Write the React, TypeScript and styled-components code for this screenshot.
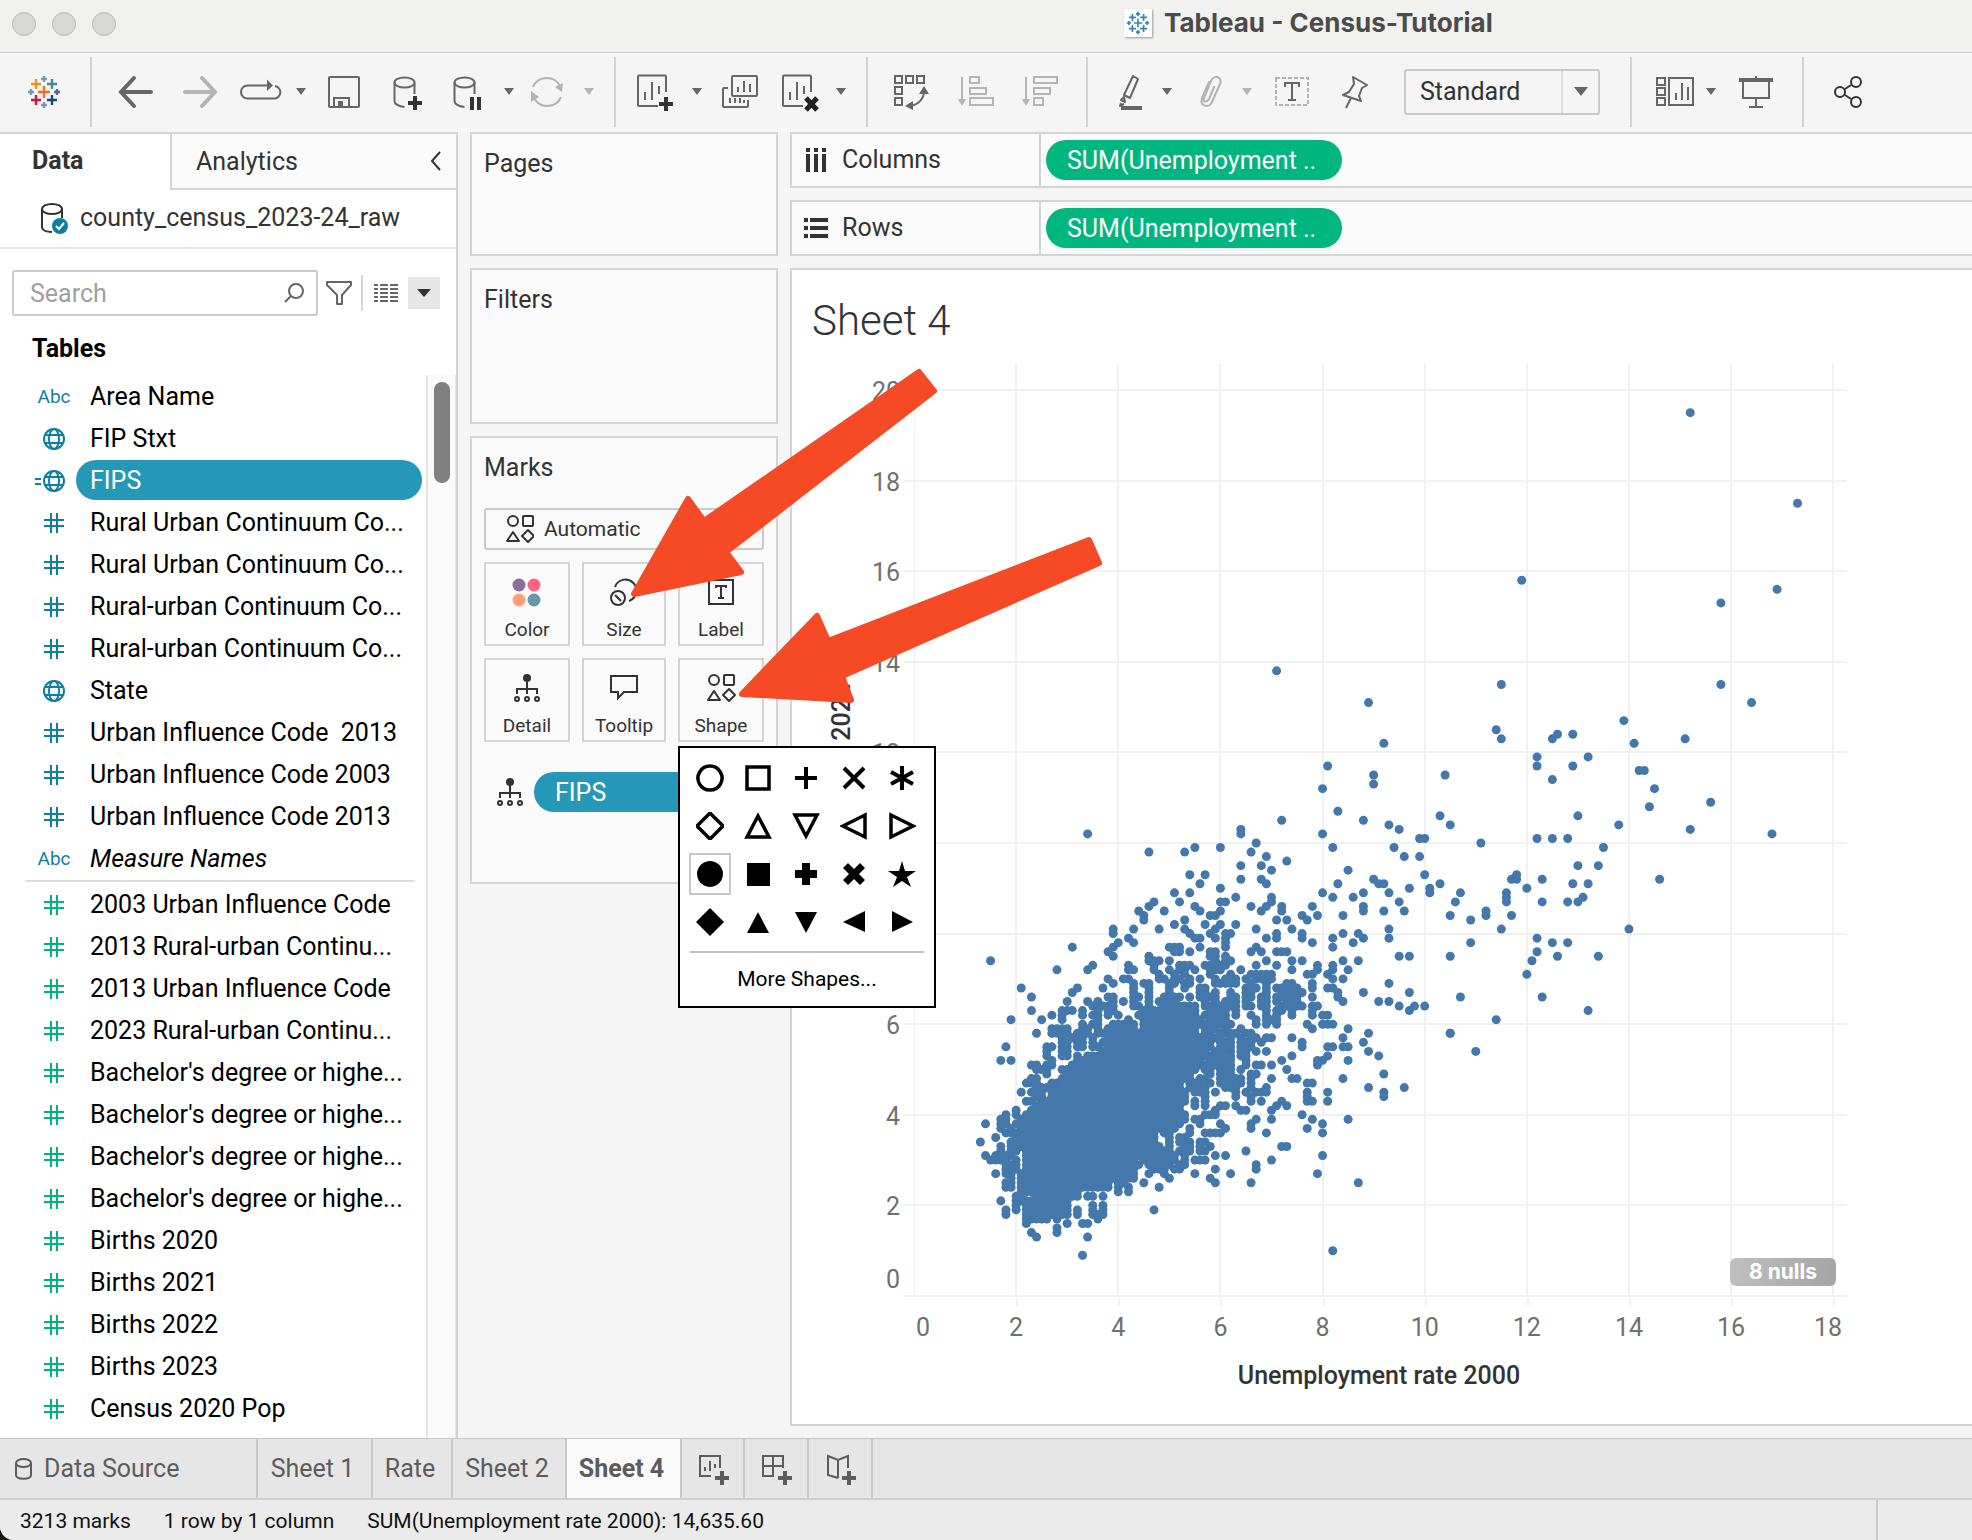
import React from 'react';
import styled, { createGlobalStyle } from 'styled-components';

const line = '#d4d4d4';
const teal = '#2698b7';
const tealDark = '#0f7fa0';
const green = '#00b380';
const ink = '#333333';
const iconGrey = '#666666';
const iconOff = '#b4b4b4';

const Global = createGlobalStyle`
  * { box-sizing: border-box; }
  body { margin: 0; background: #14140f; font-family: Roboto, "Liberation Sans", sans-serif; }
  button, input, select { font-family: inherit; color: inherit; margin: 0; }
`;

const Window = styled.div`
  min-height: 100vh;
  display: flex;
  flex-direction: column;
  background: #f5f5f5;
  color: ${ink};
  font-size: 25px;
  line-height: 28px;
  border-bottom-left-radius: 14px;
  overflow: hidden;
`;

/* ---------- title bar ---------- */
const TitleBar = styled.header`
  display: flex;
  align-items: center;
  height: 53px;
  padding-bottom: 6px;
  background: #f1f1ef;
  border-bottom: 1px solid #cccccb;
`;
const Lights = styled.div`
  display: flex;
  flex: 0 0 57%;
  gap: 16px;
  padding: 2px 12px 0;
`;
const Light = styled.button`
  width: 24px;
  height: 24px;
  padding: 0;
  border: 1px solid #bcbcba;
  border-radius: 50%;
  background: #d8d8d6;
`;
const TitleIcon = styled.span`
  display: flex;
  width: 28px;
  height: 28px;
  margin-right: 12px;
  background: #fff;
  box-shadow: 1px 1px 2px #999;
`;
const TitleText = styled.h1`
  margin: 0;
  font: 700 26px/30px Inter, Roboto, sans-serif;
  color: #4b4b4a;
  white-space: nowrap;
`;

/* ---------- toolbar ---------- */
const Toolbar = styled.nav`
  display: flex;
  align-items: center;
  height: 79px;
  padding-bottom: 2px;
`;
const Group = styled.div<{ $l: number; $r: number; $last?: boolean }>`
  display: flex;
  flex: none;
  align-items: center;
  height: 70px;
  padding: 0 ${p => p.$r}px 0 ${p => p.$l}px;
  border-right: ${p => (p.$last ? 0 : 2)}px solid ${line};
`;
const Tool = styled.button<{ $w: number; $off?: boolean }>`
  display: flex;
  justify-content: center;
  align-items: center;
  width: ${p => p.$w}px;
  height: 48px;
  padding: 0;
  border: 0;
  background: none;
  color: ${p => (p.$off ? iconOff : iconGrey)};
  svg { flex: none; overflow: visible; }
`;
const SelectWrap = styled.label`
  display: flex;
  position: relative;
  width: 196px;
  height: 46px;
  margin-left: 24px;
  border: 2px solid #cacaca;
  border-radius: 3px;
`;
const Select = styled.select`
  appearance: none;
  flex: 1;
  padding: 0 0 0 14px;
  border: 0;
  background: none;
  font-size: 25px;
`;
const SelectCaret = styled.span`
  display: flex;
  align-items: center;
  justify-content: center;
  width: 37px;
  border-left: 2px solid #dcdcdc;
  color: ${iconGrey};
`;

/* ---------- body ---------- */
const Body = styled.main`
  position: relative;
  display: flex;
  flex: 1;
  gap: 12px;
`;
const DataPane = styled.aside`
  display: flex;
  flex-direction: column;
  flex: 0 0 458px;
  background: #fff;
  border-top: 2px solid ${line};
  border-right: 2px solid ${line};
`;
const PaneTabs = styled.div`
  display: flex;
  height: 56px;
`;
const DataTab = styled.button`
  flex: 0 0 170px;
  padding: 0 0 4px 32px;
  border: 0;
  background: none;
  text-align: left;
  font-size: 25px;
  font-weight: 700;
`;
const AnalyticsTab = styled.div`
  display: flex;
  flex: 1;
  justify-content: space-between;
  align-items: center;
  padding: 0 14px 0 24px;
  background: #fafafa;
  border-left: 2px solid ${line};
  border-bottom: 2px solid ${line};
`;
const PlainButton = styled.button`
  display: flex;
  align-items: center;
  padding: 0;
  border: 0;
  background: none;
  font-size: 25px;
`;
const Source = styled.button`
  display: flex;
  align-items: center;
  gap: 12px;
  height: 59px;
  padding: 0 0 2px 40px;
  border: 0;
  border-bottom: 2px solid #e6e6e6;
  background: none;
  font-size: 25px;
`;
const SearchRow = styled.div`
  display: flex;
  align-items: center;
  padding: 21px 16px 0 12px;
`;
const SearchBox = styled.label`
  display: flex;
  align-items: center;
  width: 306px;
  height: 46px;
  padding: 0 12px 0 16px;
  border: 2px solid #cacaca;
  border-radius: 3px;
  color: ${iconGrey};
`;
const SearchInput = styled.input`
  flex: 1;
  min-width: 0;
  padding: 0;
  border: 0;
  outline: 0;
  background: none;
  font-size: 25px;
  &::placeholder { color: #a0a0a0; opacity: 1; }
`;
const FilterButton = styled(PlainButton)`
  padding: 0 9px 0 8px;
  color: ${iconGrey};
`;
const ViewButton = styled(PlainButton)`
  height: 36px;
  padding: 0 10px 0 11px;
  border-left: 2px solid ${line};
  color: ${iconGrey};
`;
const ViewMenu = styled(PlainButton)`
  justify-content: center;
  width: 32px;
  height: 32px;
  background: #e6e6e6;
  color: ${ink};
`;
const Tables = styled.h2`
  margin: 0;
  padding: 18px 0 11px 32px;
  font-size: 25px;
  line-height: 30px;
  color: #000;
`;
const Fields = styled.div`
  display: flex;
  flex: 1;
`;
const FieldColumn = styled.div`
  flex: 1;
  min-width: 0;
`;
const FieldList = styled.ul`
  margin: 0;
  padding: 0;
  list-style: none;
`;
const FieldDivider = styled.hr`
  height: 2px;
  margin: 1px 12px 1px 26px;
  border: 0;
  background: #dcdcdc;
`;
const FieldItem = styled.li`
  display: flex;
  align-items: center;
  height: 42px;
`;
const FieldIcon = styled.span<{ $c: string }>`
  display: flex;
  justify-content: center;
  flex: 0 0 76px;
  padding: 2px 0 0 32px;
  color: ${p => p.$c};
  font-size: 19px;
  svg { overflow: visible; }
`;
const FieldName = styled.button<{ $on?: boolean; $it?: boolean }>`
  flex: 1;
  height: 40px;
  margin-right: 4px;
  padding: 0 0 0 14px;
  border: 0;
  border-radius: 20px;
  background: ${p => (p.$on ? teal : 'none')};
  color: ${p => (p.$on ? '#fff' : '#000')};
  font-size: 25px;
  font-style: ${p => (p.$it ? 'italic' : 'normal')};
  text-align: left;
  white-space: pre;
`;
const Track = styled.div`
  flex: 0 0 30px;
  padding: 7px 0 0 6px;
  border-left: 2px solid #e6e6e6;
  border-right: 1px solid #e6e6e6;
  background: #fafafa;
`;
const Thumb = styled.div`
  width: 16px;
  height: 101px;
  border-radius: 8px;
  background: #808080;
`;

/* ---------- cards ---------- */
const Cards = styled.div`
  display: flex;
  flex-direction: column;
  flex: 0 0 308px;
  gap: 12px;
`;
const Card = styled.section<{ $h: number }>`
  min-height: ${p => p.$h}px;
  padding: 15px 12px;
  background: #fafafa;
  border: 2px solid ${line};
`;
const CardTitle = styled.h3`
  margin: 0;
  font-size: 25px;
  font-weight: 400;
  line-height: 30px;
`;
const MarkType = styled.label`
  display: flex;
  align-items: center;
  height: 42px;
  margin: 25px 0 12px;
  padding-left: 20px;
  border: 2px solid #cacaca;
  border-radius: 3px;
`;
const MarkSelect = styled.select`
  appearance: none;
  flex: 1;
  padding: 0 0 0 10px;
  border: 0;
  background: none;
  font-size: 21px;
`;
const MarkGrid = styled.div`
  display: grid;
  grid-template-columns: 43fr 42fr 43fr;
  gap: 12px;
`;
const MarkCell = styled.div`
  position: relative;
  display: flex;
`;
const MarkButton = styled.button`
  display: flex;
  flex: 1;
  flex-direction: column;
  align-items: center;
  justify-content: space-between;
  height: 84px;
  padding: 14px 0 2px;
  border: 2px solid ${line};
  background: none;
  font-size: 19px;
  line-height: 24px;
  svg { overflow: visible; }
`;
const PillRow = styled.div`
  display: flex;
  align-items: center;
  gap: 10px;
  margin-top: 30px;
  padding-left: 12px;
`;
const FipsPill = styled.button`
  flex: 1;
  height: 40px;
  padding: 0 0 0 21px;
  border: 0;
  border-radius: 20px;
  background: ${teal};
  color: #fff;
  font-size: 25px;
  text-align: left;
`;
const Popup = styled.div`
  position: absolute;
  z-index: 5;
  top: 88px;
  left: 0;
  width: 258px;
  padding: 6px 8px 8px;
  border: 2px solid #000;
  background: #fff;
  color: #000;
`;
const ShapeGrid = styled.div`
  display: grid;
  grid-template-columns: repeat(5, 48px);
  grid-auto-rows: 48px;
`;
const ShapeButton = styled.button<{ $on?: boolean }>`
  display: flex;
  align-items: center;
  justify-content: center;
  width: 42px;
  height: 42px;
  margin: 3px 1px;
  padding: 0;
  border: 2px solid ${p => (p.$on ? '#c8c8c8' : 'transparent')};
  background: none;
  color: #000;
`;
const MoreShapes = styled.button`
  display: block;
  width: 234px;
  margin: 5px 0 0 2px;
  padding: 13px 0 6px;
  border: 0;
  border-top: 2px solid #c0c0c0;
  background: none;
  font-size: 21px;
  line-height: 26px;
`;

/* ---------- view ---------- */
const Sheet = styled.div`
  display: flex;
  flex-direction: column;
  flex: 1;
  min-width: 0;
  gap: 12px;
  padding-bottom: 12px;
`;
const Shelf = styled.div`
  display: flex;
  align-items: center;
  height: 56px;
  background: #fafafa;
  border: 2px solid ${line};
  border-right: 0;
`;
const ShelfName = styled.div`
  display: flex;
  align-items: center;
  gap: 14px;
  flex: 0 0 249px;
  height: 52px;
  padding-left: 12px;
  border-right: 2px solid ${line};
`;
const GreenPill = styled.button`
  width: 296px;
  height: 40px;
  margin-left: 5px;
  padding: 0 0 0 21px;
  border: 0;
  border-radius: 20px;
  background: #00b67f;
  color: #fff;
  font-size: 25px;
  text-align: left;
  white-space: nowrap;
`;
const Canvas = styled.section`
  position: relative;
  flex: 1;
  background: #fff;
  border: 2px solid ${line};
  border-right: 0;
`;
const SheetTitle = styled.h2`
  margin: 0;
  padding: 27px 0 5px 20px;
  font-size: 42px;
  font-weight: 300;
  line-height: 48px;
`;
const Chart = styled.svg`
  display: block;
  width: 100%;
  height: auto;
`;
const Nulls = styled.button`
  position: absolute;
  left: 938px;
  top: 988px;
  width: 106px;
  height: 28px;
  padding: 0;
  border: 0;
  border-radius: 6px;
  background: linear-gradient(100deg, #c0c0c0, #a4a4a4);
  color: #fff;
  font: 700 21px/28px Inter, sans-serif;
`;
const Arrows = styled.svg`
  position: absolute;
  z-index: 9;
  left: 620px;
  top: 230px;
  pointer-events: none;
`;

/* ---------- footer ---------- */
const Tabs = styled.nav`
  display: flex;
  height: 62px;
  background: #e6e6e6;
  border-top: 1px solid #c6c6c6;
  border-bottom: 2px solid #d0d0d0;
`;
const Tab = styled.button<{ $w: number; $on?: boolean; $left?: boolean }>`
  display: flex;
  align-items: center;
  justify-content: ${p => (p.$left ? 'flex-start' : 'center')};
  gap: 12px;
  flex: 0 0 ${p => p.$w}px;
  padding: 0 4px 0 ${p => (p.$left ? 15 : 0)}px;
  border: 0;
  border-right: 2px solid #c9c9c9;
  background: ${p => (p.$on ? '#fafafa' : 'none')};
  color: #5c5c5c;
  font-size: 25px;
  font-weight: ${p => (p.$on ? 700 : 400)};
  white-space: nowrap;
  svg { flex: none; overflow: visible; }
`;
const IconTab = styled(Tab)`
  padding: 0;
`;
const Status = styled.footer`
  display: flex;
  gap: 33px;
  height: 40px;
  padding-left: 20px;
  background: #ebebeb;
  color: #111;
  font-size: 21px;
  line-height: 42px;
`;
const StatusEnd = styled.div`
  width: 96px;
  margin-left: auto;
  border-left: 2px solid #c9c9c9;
`;

/* ---------- icons ---------- */
type IconProps = { w?: number; h?: number; s?: number; children: React.ReactNode };
const Icon = ({ w = 40, h = 40, s = 2, children }: IconProps) => (
  <svg width={w} height={h} viewBox={`0 0 ${w} ${h}`} fill="none" stroke="currentColor" strokeWidth={s} aria-hidden="true">
    {children}
  </svg>
);
const Caret = () => (
  <Icon w={10} h={7} s={0}><path d="M0 0h10L5 7z" fill="currentColor" /></Icon>
);
const crosses: [number, number, number, string][] = [
  [20, 20, 6, '#f36f21'], [12, 12, 5, '#f6911e'], [28, 12, 5, '#3f8a9c'], [12, 28, 5, '#d4133d'],
  [28, 28, 5, '#1a447f'], [20, 7, 3, '#6ba0ac'], [7, 20, 3, '#6ba0ac'], [33, 20, 3, '#5a6591'], [20, 33, 3, '#8a92b4'],
];
const Logo = ({ size, mono }: { size: number; mono?: boolean }) => (
  <svg width={size} height={size} viewBox="0 0 40 40" fill="none" strokeWidth="2.4" aria-hidden="true">
    {crosses.map(([x, y, r, c]) => (
      <path key={`${x}-${y}`} stroke={mono ? '#3a84b4' : c} d={`M${x - r} ${y}h${2 * r}M${x} ${y - r}v${2 * r}`} />
    ))}
  </svg>
);
const Back = () => <Icon s={4}><path d="M18 6 5 20l13 14M5 20h30" strokeLinecap="round" /></Icon>;
const Forward = () => <Icon s={4}><path d="m22 6 13 14-13 14M35 20H5" strokeLinecap="round" /></Icon>;
const Replay = () => (
  <Icon>
    <path d="M35 14a6 6 0 0 1-2 12.500H7.500a6.500 6.500 0 0 1 0-13H28" />
    <path d="m27 7.500 6 6-6 5.500z" fill="currentColor" stroke="none" />
  </Icon>
);
const Save = () => (
  <Icon><rect x="5" y="5" width="30" height="30" rx="1" /><path d="M10 35V26h15v9" /><path d="M14 29h5v6h-5z" fill="currentColor" stroke="none" /></Icon>
);
const Cylinder = () => (
  <><ellipse cx="16.500" cy="10.500" rx="10" ry="5" /><path d="M6.500 10.500V29c0 3 4 5.500 10 6M26.500 10.500V22" /></>
);
const NewData = () => <Icon><Cylinder /><path d="M20 31h14M27 24v14" stroke="#333" strokeWidth="4" /></Icon>;
const PauseData = () => <Icon><Cylinder /><path d="M24 25v13M31 25v13" stroke="#333" strokeWidth="4" /></Icon>;
const Refresh = () => (
  <Icon>
    <path d="M6 15a15 15 0 0 1 27-1M34 25a15 15 0 0 1-27 1" />
    <path d="m36 11-1 9-7-5zM4 19l8 6-8 5z" fill="currentColor" stroke="none" />
  </Icon>
);
const SheetBox = () => <path d="M31 20V4.500q0-1-1-1H4q-1 0-1 1V33q0 1 1 1h19M10 28v-8M17 28V10M24 22v-8" />;
const NewSheet = () => <Icon><SheetBox /><path d="M24 32h14M31 25v14" stroke="#333" strokeWidth="4" /></Icon>;
const ClearSheet = () => <Icon><SheetBox /><path d="m26 26 11 12m0-12L26 38" stroke="#222" strokeWidth="5" /></Icon>;
const Duplicate = () => (
  <Icon><rect x="12" y="4" width="25" height="20" rx="1" /><path d="M18 20v-5M24 20V9M30 20v-8M8 16H4q-1 0-1 1v17q0 1 1 1h23q1 0 1-1v-6M10 31v-5M15 31v-5M20 31v-5M24 31v-3" /></Icon>
);
const Swap = () => (
  <Icon>
    <path d="M3 4h7v7H3zM14 4h7v7h-7zM25 4h7v7h-7zM3 15h7v7H3zM3 26h7v7H3zM32 19c0 8-6 14-14 15" />
    <path d="m32 14 5 8H27zM13 34l8-5v9z" fill="currentColor" stroke="none" />
  </Icon>
);
const Sort = ({ desc }: { desc?: boolean }) => (
  <Icon>
    <path d={desc ? 'M6 5v26M14 5h23v6H14zM14 16h16v6H14zM14 26h9v7h-9z' : 'M6 5v26M14 5h9v6h-9zM14 16h16v6H14zM14 26h23v7H14z'} />
    <path d="M2 27h8l-4 7z" fill="currentColor" stroke="none" />
  </Icon>
);
const Highlighter = () => (
  <Icon><path d="m22 4 5 3-8 19-6-3zM13 25l-3 3 4 2zM10 31l-1 3 4-2" strokeLinejoin="round" /><path d="M10 36h21" strokeWidth="4" /></Icon>
);
const Clip = () => (
  <Icon><path d="m25 15-5 12c-2 4-7 3-5-1l7-17c3-7 12-4 9 3l-8 18c-3 7-13 4-10-4l7-16" strokeLinecap="round" /></Icon>
);
const TextTool = () => (
  <Icon>
    <rect x="4" y="6" width="32" height="27" stroke={iconOff} strokeDasharray="4 2" />
    <path d="M13 15v-4h14v4M20 11v17M16 28h8" stroke={iconGrey} />
  </Icon>
);
const Pin = () => (
  <Icon><path d="m18 5 14 8-5 3-3 8 2 5L8 23l6-3 5-8zM16 26l-5 10" strokeLinejoin="round" /></Icon>
);
const ShowMe = () => (
  <Icon><path d="M2 6h8v7H2zM2 16h8v7H2zM2 26h8v7H2zM14 6h24v27H14zM21 28v-7M27 28V11M33 28V15" /></Icon>
);
const Present = () => (
  <Icon><path d="M3 8h34" strokeWidth="4" /><path d="M7 9v17h26V9M20 4v4M20 26v9M13 35h14" /></Icon>
);
const Share = () => (
  <Icon s={2}><g stroke="#333"><circle cx="12" cy="20" r="5" /><circle cx="28" cy="10" r="5" /><circle cx="28" cy="30" r="5" /><path d="m17 17 6-4M17 23l6 4" /></g></Icon>
);
const DataSource = () => (
  <Icon w={28} h={32}>
    <ellipse cx="12" cy="7" rx="10" ry="5" /><path d="M2 7v18c0 3 4 5 10 5M22 7v9" />
    <circle cx="20" cy="24" r="8" fill={tealDark} stroke="none" /><path d="m16 24 3 3 5-6" stroke="#fff" />
  </Icon>
);
const Magnifier = () => <Icon w={20} h={20}><circle cx="12" cy="8" r="7" /><path d="m7 13-6 6" /></Icon>;
const Funnel = () => <Icon w={26} h={26}><path d="M1 2h24v3L16 15v9h-5v-9L1 5z" strokeLinejoin="round" /></Icon>;
const Grid = () => <Icon w={24} h={20}><path d="M0 2h4M6 2h8M16 2h8M0 6h4M6 6h8M16 6h8M0 10h4M6 10h8M16 10h8M0 14h4M6 14h8M16 14h8M0 18h4M6 18h8M16 18h8" /></Icon>;
const Chevron = () => <Icon w={12} h={20}><path d="M10 1 2 10l8 9" /></Icon>;
const Hash = () => <Icon w={20} h={20}><path d="M7 0v20M13 0v20M0 7h20M0 13h20" /></Icon>;
const Globe = ({ eq }: { eq?: boolean }) => (
  <Icon w={22} h={22}><circle cx="11" cy="11" r="10" /><ellipse cx="11" cy="11" rx="5" ry="10" /><path d="M2 7h18M2 15h18" />{eq && <path d="M-8 9h6M-8 14h6" />}</Icon>
);
const Detail = () => (
  <Icon w={28} h={28}><circle cx="14" cy="4" r="4" fill="currentColor" stroke="none" /><path d="M14 8v12M4 20v-5h20v5" /><circle cx="4" cy="25" r="2" /><circle cx="14" cy="25" r="2" /><circle cx="24" cy="25" r="2" /></Icon>
);
const ShapesIcon = () => (
  <Icon w={28} h={28}><circle cx="7" cy="6" r="5" /><rect x="17" y="1" width="10" height="10" rx="1" /><path d="M7 17 1 26h12zM22 15l6 6-6 6-6-6z" strokeLinejoin="round" /></Icon>
);
const ColorIcon = () => (
  <Icon w={28} h={28} s={0}><circle cx="6" cy="7" r="6.500" fill="#8b6f9b" /><circle cx="21" cy="7" r="6.500" fill="#ff6380" /><circle cx="6" cy="22" r="6.500" fill="#ffa07a" /><circle cx="21" cy="22" r="6.500" fill="#6699a5" /></Icon>
);
const SizeIcon = () => (
  <Icon w={28} h={28}><circle cx="8" cy="20" r="7" /><path d="m5 17 6 6M5 9a11 11 0 1 1 14 14" /></Icon>
);
const LabelIcon = () => <Icon w={28} h={28}><rect x="2" y="2" width="24" height="24" /><path d="M9 10V8h10v2M14 8v12M11 20h6" /></Icon>;
const TooltipIcon = () => <Icon w={28} h={28}><path d="M1 2h26v16H14l-6 6v-6H1z" /></Icon>;
const ColumnsIcon = () => <Icon w={24} h={24} s={4}><path d="M4 0v4M12 0v4M20 0v4M4 6v18M12 6v18M20 6v18" /></Icon>;
const RowsIcon = () => <Icon w={24} h={24} s={4}><path d="M0 4h4M0 12h4M0 20h4M6 4h18M6 12h18M6 20h18" /></Icon>;
const PlusMark = () => <path d="M17 24h14M24 17v14" strokeWidth="4" />;

const shapes: [string, boolean, string, number?][] = [
  ['Circle', false, 'M14 2a12 12 0 1 0 .01 0z'],
  ['Square', false, 'M3 3h22v22H3z'],
  ['Plus', false, 'M3 14h22M14 3v22', 4],
  ['Cross', false, 'm4 4 20 20M24 4 4 24', 4],
  ['Asterisk', false, 'M14 2v24M3 8l22 12M25 8 3 20', 4],
  ['Diamond', false, 'm14 1 13 13-13 13L1 14z'],
  ['Triangle up', false, 'm14 4 11 21H3z'],
  ['Triangle down', false, 'm14 24 11-21H3z'],
  ['Triangle left', false, 'm3 14 22-11v22z'],
  ['Triangle right', false, 'm25 14-22-11v22z'],
  ['Filled circle', true, 'M14 1a13 13 0 1 0 .01 0z'],
  ['Filled square', true, 'M3 3h23v23H3z'],
  ['Filled plus', true, 'M10 3h8v7h7v8h-7v7h-8v-7H3v-8h7z'],
  ['Filled cross', true, 'm8 3 6 6 6-6 5 5-6 6 6 6-5 5-6-6-6 6-5-5 6-6-6-6z'],
  ['Star', true, 'm14 1 3 10h11l-9 6 4 10-9-6-9 6 4-10-9-6h11z'],
  ['Filled diamond', true, 'm14 0 14 14-14 14L0 14z'],
  ['Filled triangle up', true, 'm14 4 11 21H3z'],
  ['Filled triangle down', true, 'm14 25 11-21H3z'],
  ['Filled triangle left', true, 'm3 14 22-11v21z'],
  ['Filled triangle right', true, 'm25 14-21-11v21z'],
];

/* ---------- data ---------- */
type Kind = 'abc' | 'geo' | 'calc' | 'num';
const dimensions: [Kind, string][] = [
  ['abc', 'Area Name'], ['geo', 'FIP Stxt'], ['calc', 'FIPS'],
  ['num', 'Rural Urban Continuum Co...'], ['num', 'Rural Urban Continuum Co...'],
  ['num', 'Rural-urban Continuum Co...'], ['num', 'Rural-urban Continuum Co...'],
  ['geo', 'State'], ['num', 'Urban Influence Code  2013'], ['num', 'Urban Influence Code 2003'],
  ['num', 'Urban Influence Code 2013'], ['abc', 'Measure Names'],
];
const measures = [
  '2003 Urban Influence Code', '2013 Rural-urban Continu...', '2013 Urban Influence Code', '2023 Rural-urban Continu...',
  "Bachelor's degree or highe...", "Bachelor's degree or highe...", "Bachelor's degree or highe...", "Bachelor's degree or highe...",
  'Births 2020', 'Births 2021', 'Births 2022', 'Births 2023', 'Census 2020 Pop',
];

// One line per rate on the vertical axis, in tenths: "y: x x x-x".
const marks = `
9:33|10:82|13:24 34|14:23 28|15:28|16:22 30 33 34|17:22-26 28 36|18:18 22-30 32 35-37|19:18 20 22-30 32 35 37 47
20:20 22-30 35 37|21:17 20 21 22-30|22:20 21 24-32 34 35 37|23:21-32 40 42|24:18 19 21-38 40 42 48|25:18 19 21-38 40 41 45 59 66 87
26:19 21-39 41-43 50 58|27:16 18 19 21-43 46 49 55 62 79|28:18-20 22-43 47-49 51 52 59 67|29:18-20 22-44 46-50 52 53 67
30:15-18 20 22-43 45-51 53 55-57 70|31:14 16-19 22-51 53 59 61 80|32:17 19 20 22-50 52-54 56 57 65|33:17 19-48 50 53 54 56 58 72 73
34:13 19-47 50 52-54 56 57|35:16 20-47 50 52 53|36:18-47 49 50 54 57-60 69 80|37:17 19 21-51 54 61 66 77|38:14 17 18 20-52 56 60 66 80
39:17 18 21-53 55 56 67 70 78 85|40:18 20 22-53 57-59 76|41:20 23-52 59 64 65 70|42:24-52 55 57 60 61 63 71 73
43:22 23 25-53 55 57 66 68 72 77 78 81|44:24 25 27-53 57 63 66 77 92|45:21 23-25 27-53 55-57 59 63 65 67-69 77 81 92
46:24-52 54-57 61-63 66 69 89 96|47:22-24 27 28 30-52 54-56 58 60-62 64 66 77 78|48:23 24 29-54 56 57 60-64 66 70 74 75 84
49:26 30-54 58 60-62 66 67 92|50:24-26 29-55 57 58 60-62 64 73|51:23 24 26 27 31-62 65 67 68 70 79|52:17 19 27 32-56 58-62 65 72 79 80 85
53:26 29 30 32 34-60 62 64 65 74 81 91|54:26 29 30 37-57 59-62 64 65 67 69 89|55:18 26 27 29 30 32 33 35 36 38-58 60-62 64-66 76 81 82 84 85
56:29 30 32 33 35 37-58 60-62 64-66 68 76 88|57:29 31-33 35 38-60 62 64 66 67 69 70 74 84|58:24 27-30 32-34 36-55 57 58 60-63 65 66 89 105
59:27-30 33 34 36 38-43 45-55 57-59 61 64 78 85|60:33 35 36 39-43 45-62 67 69 71 77 80-82|61:19 25 29 36 42 45-56 58-61 67 69-71
62:27 29 33 35 36 38 40 44-55 57-61 63 66 69 71 74 78 80 81|63:23 29-31 33 36 38 39 45-55 58-61 63 69 71 72 74 78 97
64:35-39 43 44 46 49-55 57-63 65 66 68 69 72-76 78 79 95 98 100|65:30 34 36 39 41 43 46 48-51 57 59 61-63 65 68 69 71 73-75 84 91 93
66:23 38 39 43 44 46 49-52 54 56-59 62 63 65 66 68 69 71-75 78 83 107|67:31 43 46 50 56 57 59 62 65 66 69 72-76 83 88 97
68:21 32 37 43 46 50 53 56 57 65-67 69 71-75 78 81 82|69:39 43 45 46 50 51 53 54 59-63 66 69 73 74 78 93
70:38 41 42 48 49 51 52 54 56 59 61-63 65 67-70 82 84|71:48 51 53 58 62 66-70 77 78 81|72:28 34 42 43 47 50 52 53 55 58-60 64 74 79 82 85
73:35 42 47 52-54 57-61 67 71 79 82|74:15 46-48 50 59 61 62 69 74 76 84 87 121|75:39 46 58 59 61 95 97 105 126 134|76:38 51 52 54 58 59 66 68 71-73 122
77:31 39 50-52 56 61 67 82|78:40 43 61 78 86 109 125 128|79:42 55 56 59 61 69 71 76 82 88 93 122|80:39 54 58 61 62 71 76 84 87
81:39 43 48 53 59 67 74 93 115 140|82:51 57 60 63|83:45 53 71 73 77 109|84:45 58 59 76 79 84 105 112 117|85:44 49 56 60 68 72 88 92 96 112
86:46 55 66 69 72 78 88|87:47 52 60 61 70 95 106 116 123 128 130|88:63 70 82 86 116 131|89:51 54 80 88 93 101 107 116|90:60 97 101 120
91:56 69 83 91 92 103 129 132|92:64 68 90 117 118 123 146|93:54 57 100 118|94:70 85|95:64 68 130 134|96:73|97:69 96 99|98:46 53 66
99:55 60 82 94 135|100:67 111|101:99 100 122 125 128|102:34 64 80 168|103:64 95 152|104:93 105 138|105:72 88|106:103 130|107:83|108:144
109:156|112:80 145|113:90|114:125|115:90 104|116:142 143|117:81 122 129|119:122 132|122:92 141|123:115 125 151|124:126 129|125:114|127:139
131:89 164|135:115 158|138:71|153:158|156:169|158:119|175:173|195:152
71:120|66:123|63:132|61:114|58:105|54:110`;

const points = marks.trim().split(/[\n|]/).flatMap(row => {
  const [y, xs] = row.split(':');
  return xs.trim().split(' ').flatMap(token => {
    const [from, to = from] = token.split('-').map(Number);
    const out: [number, number][] = [];
    for (let x = from; x <= to; x++) out.push([x / 10, Number(y) / 10]);
    return out;
  });
});

const px = (v: number) => 122 + v * 51.07;
const py = (v: number) => 946 - v * 45.3;
const ticks = [2, 4, 6, 8, 10, 12, 14, 16, 18];

const Scatter = () => (
  <Chart viewBox="0 0 1180 1070" role="img" aria-label="Unemployment rate scatter plot">
    <g stroke="#f1f1f1" strokeWidth="2">
      <path d="M122.500 14v931" strokeWidth="1" />
      {ticks.map(t => <path key={t} d={`M${Math.round(px(t))} 14v931M${Math.round(px(t)) + 1} 948v8`} />)}
      {[0, ...ticks, 20].map(t => <path key={t} d={`M112 ${Math.round(py(t))}H1055`} />)}
    </g>
    <g fill="#4478ab">
      {points.map(([x, y], i) => <circle key={i} cx={px(x)} cy={py(y)} r="4.500" />)}
    </g>
    <g fill="#707070" fontSize="25">
      {[0, ...ticks].map(t => (
        <text key={t} x={t === 0 ? 131 : t === 18 ? 1036 : px(t)} y="986" textAnchor="middle">{t}</text>
      ))}
      {[0, ...ticks, 20].map(t => (
        <text key={t} x="108" y={t === 0 ? 938 : py(t) + 10} textAnchor="end">{t}</text>
      ))}
    </g>
    <g fill={ink} fontSize="25" fontWeight="500" textAnchor="middle">
      <text x="587" y="1034">Unemployment rate 2000</text>
      <text transform="translate(58 475) rotate(-90)">Unemployment rate 2022</text>
    </g>
  </Chart>
);

const fieldIcon = (kind: Kind) =>
  kind === 'abc' ? 'Abc' : kind === 'num' ? <Hash /> : <Globe eq={kind === 'calc'} />;

const markButtons: [string, React.ReactNode][] = [
  ['Color', <ColorIcon />], ['Size', <SizeIcon />], ['Label', <LabelIcon />],
  ['Detail', <Detail />], ['Tooltip', <TooltipIcon />], ['Shape', <ShapesIcon />],
];

const ShapeMenu = () => (
  <Popup>
    <ShapeGrid>
      {shapes.map(([name, filled, d, s = 3.5]) => (
        <ShapeButton key={name} aria-label={name} $on={name === 'Filled circle'}>
          <svg width="28" height="28" viewBox="0 0 28 28" fill={filled ? 'currentColor' : 'none'} stroke="currentColor" strokeWidth={filled ? 0 : s}>
            <path d={d} />
          </svg>
        </ShapeButton>
      ))}
    </ShapeGrid>
    <MoreShapes>More Shapes...</MoreShapes>
  </Popup>
);

export default function App() {
  return (
    <>
      <Global />
      <Window>
        <TitleBar>
          <Lights>
            <Light aria-label="Close" /><Light aria-label="Minimize" /><Light aria-label="Zoom" />
          </Lights>
          <TitleIcon><Logo size={28} mono /></TitleIcon>
          <TitleText>Tableau - Census-Tutorial</TitleText>
        </TitleBar>

        <Toolbar>
          <Group $l={12} $r={14}><Tool $w={64} aria-label="Start page"><Logo size={40} /></Tool></Group>
          <Group $l={12} $r={6}>
            <Tool $w={64} aria-label="Undo"><Back /></Tool>
            <Tool $w={64} $off aria-label="Redo"><Forward /></Tool>
            <Tool $w={56} aria-label="Replay"><Replay /></Tool>
            <Tool $w={26} aria-label="Replay options"><Caret /></Tool>
            <Tool $w={60} aria-label="Save"><Save /></Tool>
            <Tool $w={68} aria-label="New data source"><NewData /></Tool>
            <Tool $w={52} aria-label="Pause updates"><PauseData /></Tool>
            <Tool $w={30} aria-label="Pause options"><Caret /></Tool>
            <Tool $w={46} $off aria-label="Run update"><Refresh /></Tool>
            <Tool $w={38} $off aria-label="Update options"><Caret /></Tool>
          </Group>
          <Group $l={12} $r={16}>
            <Tool $w={54} aria-label="New worksheet"><NewSheet /></Tool>
            <Tool $w={30} aria-label="New worksheet options"><Caret /></Tool>
            <Tool $w={56} aria-label="Duplicate"><Duplicate /></Tool>
            <Tool $w={64} aria-label="Clear sheet"><ClearSheet /></Tool>
            <Tool $w={18} aria-label="Clear options"><Caret /></Tool>
          </Group>
          <Group $l={12} $r={14}>
            <Tool $w={64} aria-label="Swap rows and columns"><Swap /></Tool>
            <Tool $w={64} $off aria-label="Sort ascending"><Sort /></Tool>
            <Tool $w={64} $off aria-label="Sort descending"><Sort desc /></Tool>
          </Group>
          <Group $l={18} $r={30}>
            <Tool $w={50} aria-label="Highlight"><Highlighter /></Tool>
            <Tool $w={22} aria-label="Highlight options"><Caret /></Tool>
            <Tool $w={62} $off aria-label="Group members"><Clip /></Tool>
            <Tool $w={14} $off aria-label="Group options"><Caret /></Tool>
            <Tool $w={76} aria-label="Show mark labels"><TextTool /></Tool>
            <Tool $w={50} aria-label="Fix axes"><Pin /></Tool>
            <SelectWrap>
              <Select aria-label="Fit"><option>Standard</option></Select>
              <SelectCaret><Icon w={14} h={9} s={0}><path d="M0 0h14L7 9z" fill="currentColor" /></Icon></SelectCaret>
            </SelectWrap>
          </Group>
          <Group $l={14} $r={8}>
            <Tool $w={58} aria-label="Show cards"><ShowMe /></Tool>
            <Tool $w={14} aria-label="Card options"><Caret /></Tool>
            <Tool $w={76} aria-label="Presentation mode"><Present /></Tool>
          </Group>
          <Group $l={14} $r={0} $last><Tool $w={60} aria-label="Share"><Share /></Tool></Group>
        </Toolbar>

        <Body>
          <DataPane>
            <PaneTabs>
              <DataTab>Data</DataTab>
              <AnalyticsTab>
                <PlainButton>Analytics</PlainButton>
                <PlainButton aria-label="Collapse pane"><Chevron /></PlainButton>
              </AnalyticsTab>
            </PaneTabs>
            <Source><DataSource />county_census_2023-24_raw</Source>
            <SearchRow>
              <SearchBox>
                <SearchInput type="text" placeholder="Search" aria-label="Search" />
                <Magnifier />
              </SearchBox>
              <FilterButton aria-label="Filter fields"><Funnel /></FilterButton>
              <ViewButton aria-label="View data"><Grid /></ViewButton>
              <ViewMenu aria-label="Data pane menu"><Icon w={14} h={8} s={0}><path d="M0 0h14L7 8z" fill="currentColor" /></Icon></ViewMenu>
            </SearchRow>
            <Tables>Tables</Tables>
            <Fields>
              <FieldColumn>
                <FieldList>
                  {dimensions.map(([kind, name], i) => (
                    <FieldItem key={i}>
                      <FieldIcon $c={tealDark}>{fieldIcon(kind)}</FieldIcon>
                      <FieldName $on={name === 'FIPS'} $it={name === 'Measure Names'}>{name}</FieldName>
                    </FieldItem>
                  ))}
                </FieldList>
                <FieldDivider />
                <FieldList>
                  {measures.map((name, i) => (
                    <FieldItem key={i}>
                      <FieldIcon $c={green}><Hash /></FieldIcon>
                      <FieldName>{name}</FieldName>
                    </FieldItem>
                  ))}
                </FieldList>
              </FieldColumn>
              <Track><Thumb /></Track>
            </Fields>
          </DataPane>

          <Cards>
            <Card $h={124}><CardTitle>Pages</CardTitle></Card>
            <Card $h={156}><CardTitle>Filters</CardTitle></Card>
            <Card $h={448}>
              <CardTitle>Marks</CardTitle>
              <MarkType>
                <ShapesIcon />
                <MarkSelect aria-label="Mark type"><option>Automatic</option></MarkSelect>
              </MarkType>
              <MarkGrid>
                {markButtons.map(([name, icon]) => (
                  <MarkCell key={name}>
                    <MarkButton>{icon}{name}</MarkButton>
                    {name === 'Shape' && <ShapeMenu />}
                  </MarkCell>
                ))}
              </MarkGrid>
              <PillRow><Detail /><FipsPill>FIPS</FipsPill></PillRow>
            </Card>
          </Cards>

          <Sheet>
            <Shelf>
              <ShelfName><ColumnsIcon />Columns</ShelfName>
              <GreenPill>SUM(Unemployment ..</GreenPill>
            </Shelf>
            <Shelf>
              <ShelfName><RowsIcon />Rows</ShelfName>
              <GreenPill>SUM(Unemployment ..</GreenPill>
            </Shelf>
            <Canvas>
              <SheetTitle>Sheet 4</SheetTitle>
              <Scatter />
              <Nulls>8 nulls</Nulls>
            </Canvas>
          </Sheet>

          <Arrows width="500" height="360" viewBox="620 362 500 360" fill="#f54a25" stroke="#f54a25" strokeWidth="6" strokeLinejoin="round" aria-hidden="true">
            <path d="M919 372 934 391 726 552 741 572 634 594 688 499 704 521z" />
            <path d="M1089 540 1099 563 842 676 851 700 742 694 817 616 828 641z" />
          </Arrows>
        </Body>

        <Tabs>
          <Tab $w={258} $left>
            <Icon w={17} h={22}><ellipse cx="8.500" cy="5" rx="7.500" ry="4" /><path d="M1 5v12c0 5 15 5 15 0V5" /></Icon>
            Data Source
          </Tab>
          <Tab $w={115}>Sheet 1</Tab>
          <Tab $w={80}>Rate</Tab>
          <Tab $w={114}>Sheet 2</Tab>
          <Tab $w={115} $on>Sheet 4</Tab>
          <IconTab $w={63} aria-label="New worksheet">
            <Icon w={30} h={30}><path d="M22 14V2H2v20h11M7 17v-4M12 17V7M17 14v-4" /><PlusMark /></Icon>
          </IconTab>
          <IconTab $w={64} aria-label="New dashboard">
            <Icon w={30} h={30}><path d="M22 14V2H2v20h11M2 12h20M12 2v20" /><PlusMark /></Icon>
          </IconTab>
          <IconTab $w={64} aria-label="New story">
            <Icon w={30} h={30}><path d="M23 14V2l-10 4L3 2v19l10 3M13 6v18" /><PlusMark /></Icon>
          </IconTab>
        </Tabs>
        <Status>
          <span>3213 marks</span>
          <span>1 row by 1 column</span>
          <span>SUM(Unemployment rate 2000): 14,635.60</span>
          <StatusEnd />
        </Status>
      </Window>
    </>
  );
}
